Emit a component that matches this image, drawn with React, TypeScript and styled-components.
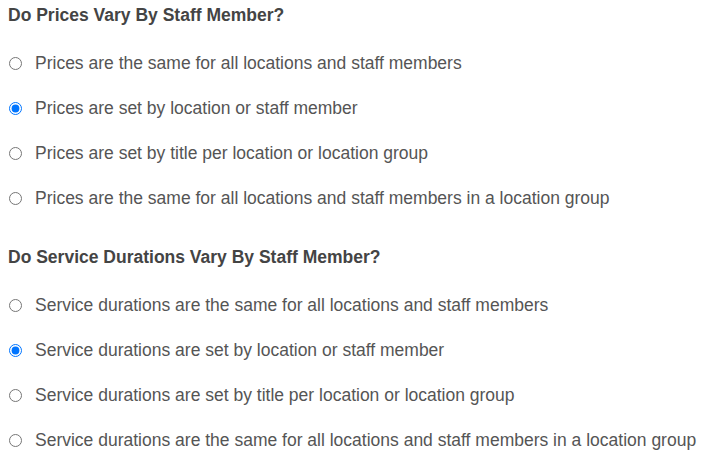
import React from "react";
import styled, { createGlobalStyle } from "styled-components";

const Global = createGlobalStyle`
  body {
    margin: 0;
    background: #ffffff;
    font-family: "Liberation Sans", Arial, sans-serif;
  }
`;

const Page = styled.div`
  padding: 5px 8px 0 8px;
  display: flex;
  flex-direction: column;
  gap: 39px;
`;

const Section = styled.section`
  display: flex;
  flex-direction: column;
`;

const Heading = styled.h3`
  margin: 0;
  font-size: 17.5px;
  line-height: 20px;
  font-weight: bold;
  color: #444444;
`;

const Options = styled.div`
  display: flex;
  flex-direction: column;
  gap: 25px;
  margin-top: 28px;
`;

const Option = styled.label`
  display: flex;
  align-items: center;
  height: 20px;
  font-size: 17.5px;
  line-height: 20px;
  color: #555555;
  cursor: pointer;
  white-space: nowrap;
`;

const Radio = styled.input.attrs({ type: "radio" })`
  margin: 0 13px 0 1px;
  width: 13px;
  height: 13px;
  flex: none;
`;

const groups = [
  {
    name: "prices",
    title: "Do Prices Vary By Staff Member?",
    checked: 1,
    options: [
      "Prices are the same for all locations and staff members",
      "Prices are set by location or staff member",
      "Prices are set by title per location or location group",
      "Prices are the same for all locations and staff members in a location group",
    ],
  },
  {
    name: "durations",
    title: "Do Service Durations Vary By Staff Member?",
    checked: 1,
    options: [
      "Service durations are the same for all locations and staff members",
      "Service durations are set by location or staff member",
      "Service durations are set by title per location or location group",
      "Service durations are the same for all locations and staff members in a location group",
    ],
  },
];

export default function App() {
  return (
    <>
      <Global />
      <Page>
        {groups.map((g) => (
          <Section key={g.name}>
            <Heading>{g.title}</Heading>
            <Options>
              {g.options.map((o, i) => (
                <Option key={o}>
                  <Radio name={g.name} defaultChecked={i === g.checked} />
                  {o}
                </Option>
              ))}
            </Options>
          </Section>
        ))}
      </Page>
    </>
  );
}
